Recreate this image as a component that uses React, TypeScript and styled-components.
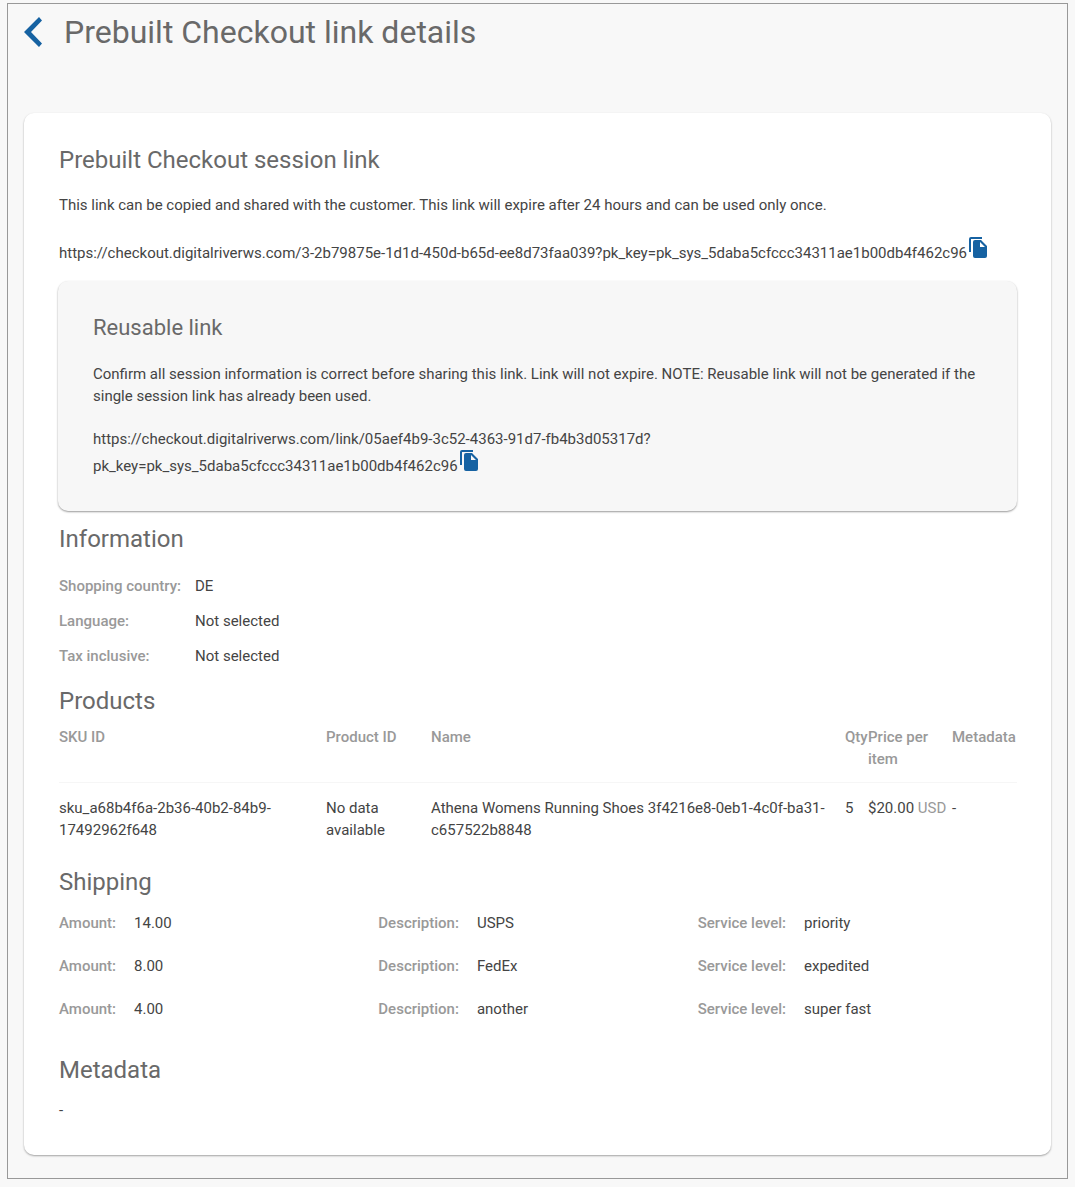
import React from "react";
import styled, { createGlobalStyle } from "styled-components";

const GlobalStyle = createGlobalStyle`
  *, *::before, *::after { box-sizing: border-box; }
  body {
    margin: 0;
    background: #f8f8f8;
    color: #444;
    font-family: Roboto, "Liberation Sans", sans-serif;
    font-size: 15px;
    line-height: 22px;
  }
  h1, h2, h3, p, dl, dd { margin: 0; font-weight: 400; }
`;

const Frame = styled.div`
  margin: 3px 7px 7px;
  padding: 8px 16px 23px;
  border: 1px solid #999;
`;

const PageHeader = styled.header`
  display: flex;
  align-items: center;
  gap: 22px;
  margin-bottom: 61px;
`;

const BackButton = styled.button`
  display: flex;
  padding: 0;
  border: 0;
  background: none;
  color: #1662a2;
  cursor: pointer;
`;

const PageTitle = styled.h1`
  color: #696969;
  font-size: 32px;
  line-height: 40px;
`;

const Card = styled.main`
  padding: 33px 34px 34px;
  border-radius: 10px;
  background: #fff;
  box-shadow: 0 1px 2px rgba(0, 0, 0, 0.35);
`;

const Section = styled.section<{ $space: number }>`
  padding-left: 1px;
  margin-bottom: ${({ $space }) => $space}px;
`;

const SectionTitle = styled.h2<{ $space: number }>`
  margin-bottom: ${({ $space }) => $space}px;
  color: #696969;
  font-size: 24px;
  line-height: 28px;
`;

const Panel = styled.section`
  margin-bottom: 14px;
  padding: 33px 35px 34px;
  border-radius: 10px;
  background: #f7f7f7;
  box-shadow: 0 1px 2px rgba(0, 0, 0, 0.4);
`;

const PanelTitle = styled.h3`
  margin-bottom: 21px;
  color: #696969;
  font-size: 22px;
  line-height: 28px;
`;

const LinkText = styled.p`
  margin-top: 21px;
  overflow-wrap: anywhere;
`;

const CopyButton = styled.button`
  display: inline-flex;
  margin: 0 0 0 2px;
  padding: 0;
  border: 0;
  background: none;
  color: #1662a2;
  vertical-align: baseline;
  cursor: pointer;
`;

const InfoList = styled.dl`
  display: grid;
  grid-template-columns: 136px 1fr;
  row-gap: 13px;
`;

const Term = styled.dt`
  color: #999;
  font-weight: 500;
`;

const ProductTable = styled.table`
  width: 100%;
  table-layout: fixed;
  border-collapse: collapse;
  text-align: left;
`;

const HeadCell = styled.th<{ $width?: number }>`
  width: ${({ $width }) => ($width ? `${$width}px` : "auto")};
  padding: 0 0 12px;
  border-bottom: 1px solid #f6f6f6;
  color: #999;
  font-weight: 500;
  vertical-align: top;
`;

const Cell = styled.td`
  padding: 14px 0 0;
  vertical-align: top;
`;

const Currency = styled.span`
  color: #999;
`;

const ShippingRow = styled.dl`
  display: grid;
  grid-template-columns: repeat(3, 1fr);
  & + & { margin-top: 21px; }
`;

const Field = styled.div`
  display: flex;
  gap: 18px;
`;

const CopyIcon = () => (
  <svg width="18" height="21" viewBox="0 0 18 21" fill="currentColor" aria-hidden="true">
    <path d="M13 0H2Q0 0 0 2v13h2V2h11z" />
    <path d="M6 3h6l6 6v10q0 2-2 2H6q-2 0-2-2V5q0-2 2-2zm5 2v5h5z" />
  </svg>
);

const CopyLink = ({ url }: { url: string }) => (
  <LinkText>
    {url}
    <CopyButton type="button" aria-label="Copy link">
      <CopyIcon />
    </CopyButton>
  </LinkText>
);

const information = [
  ["Shopping country:", "DE"],
  ["Language:", "Not selected"],
  ["Tax inclusive:", "Not selected"],
];

const shipping = [
  { amount: "14.00", description: "USPS", level: "priority" },
  { amount: "8.00", description: "FedEx", level: "expedited" },
  { amount: "4.00", description: "another", level: "super fast" },
];

export default function App() {
  return (
    <>
      <GlobalStyle />
      <Frame>
        <PageHeader>
          <BackButton type="button" aria-label="Back">
            <svg width="18" height="30" viewBox="0 0 18 30" fill="currentColor" aria-hidden="true">
              <path d="M15 0l3 3.400L7 15l11 11.600L15 30 0 15z" />
            </svg>
          </BackButton>
          <PageTitle>Prebuilt Checkout link details</PageTitle>
        </PageHeader>
        <Card>
          <Section $space={17}>
            <SectionTitle $space={20}>Prebuilt Checkout session link</SectionTitle>
            <p>
              This link can be copied and shared with the customer. This link will expire after 24
              hours and can be used only once.
            </p>
            <CopyLink url="https://checkout.digitalriverws.com/3-2b79875e-1d1d-450d-b65d-ee8d73faa039?pk_key=pk_sys_5daba5cfccc34311ae1b00db4f462c96" />
          </Section>
          <Panel>
            <PanelTitle>Reusable link</PanelTitle>
            <p>
              Confirm all session information is correct before sharing this link. Link will not
              expire. NOTE: Reusable link will not be generated if the single session link has
              already been used.
            </p>
            <CopyLink url="https://checkout.digitalriverws.com/link/05aef4b9-3c52-4363-91d7-fb4b3d05317d?pk_key=pk_sys_5daba5cfccc34311ae1b00db4f462c96" />
          </Panel>
          <Section $space={20}>
            <SectionTitle $space={22}>Information</SectionTitle>
            <InfoList>
              {information.map(([label, value]) => (
                <React.Fragment key={label}>
                  <Term>{label}</Term>
                  <dd>{value}</dd>
                </React.Fragment>
              ))}
            </InfoList>
          </Section>
          <Section $space={27}>
            <SectionTitle $space={11}>Products</SectionTitle>
            <ProductTable>
              <thead>
                <tr>
                  <HeadCell $width={267}>SKU ID</HeadCell>
                  <HeadCell $width={105}>Product ID</HeadCell>
                  <HeadCell>Name</HeadCell>
                  <HeadCell $width={23}>Qty</HeadCell>
                  <HeadCell $width={84}>Price per item</HeadCell>
                  <HeadCell $width={65}>Metadata</HeadCell>
                </tr>
              </thead>
              <tbody>
                <tr>
                  <Cell>sku_a68b4f6a-2b36-40b2-84b9-17492962f648</Cell>
                  <Cell>No data available</Cell>
                  <Cell>Athena Womens Running Shoes 3f4216e8-0eb1-4c0f-ba31-c657522b8848</Cell>
                  <Cell>5</Cell>
                  <Cell>
                    $20.00 <Currency>USD</Currency>
                  </Cell>
                  <Cell>-</Cell>
                </tr>
              </tbody>
            </ProductTable>
          </Section>
          <Section $space={36}>
            <SectionTitle $space={16}>Shipping</SectionTitle>
            {shipping.map((row) => (
              <ShippingRow key={row.amount}>
                <Field>
                  <Term>Amount:</Term>
                  <dd>{row.amount}</dd>
                </Field>
                <Field>
                  <Term>Description:</Term>
                  <dd>{row.description}</dd>
                </Field>
                <Field>
                  <Term>Service level:</Term>
                  <dd>{row.level}</dd>
                </Field>
              </ShippingRow>
            ))}
          </Section>
          <Section $space={0}>
            <SectionTitle $space={15}>Metadata</SectionTitle>
            <p>-</p>
          </Section>
        </Card>
      </Frame>
    </>
  );
}
